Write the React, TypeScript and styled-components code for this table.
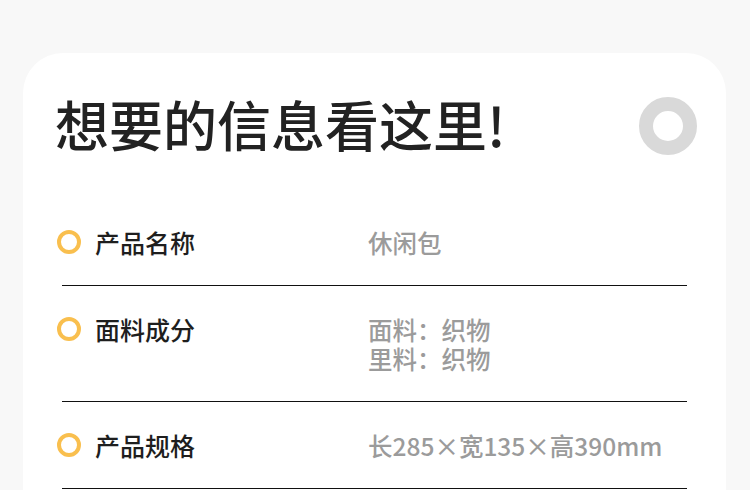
import React from "react";
import styled, { createGlobalStyle } from "styled-components";

const GlobalStyle = createGlobalStyle`
    html, body {
        margin: 0;
        padding: 0;
        background-color: #f8f8f8;
        overflow: hidden;
    }

    body {
        font-family: "Noto Sans CJK SC", "Noto Sans", sans-serif;
    }
`;

const Page = styled.div`
    width: 750px;
    height: 490px;
    padding: 53px 24px 0 23px;
    box-sizing: border-box;
`;

const Card = styled.div`
    background-color: #ffffff;
    border-radius: 40px 40px 0 0;
    min-height: 500px;
    padding: 44px 29px 0 32px;
`;

const Header = styled.div`
    display: flex;
    justify-content: space-between;
    align-items: center;
    height: 58px;
`;

const Title = styled.h1`
    margin: -4px 0 0;
    font-size: 54px;
    line-height: 58px;
    font-weight: 500;
    color: #222222;
`;

const Ring = styled.div`
    width: 30px;
    height: 30px;
    border: 14px solid #d9d9d9;
    border-radius: 50%;
`;

const List = styled.div`
    margin: 44px 10px 0 7px;
`;

const Row = styled.div`
    display: flex;
    align-items: flex-start;
    padding: 29px 0 28px;
    border-bottom: 1px solid #111111;
`;

const Dot = styled.span`
    flex: none;
    width: 16px;
    height: 16px;
    margin: 2px 14px 0 -5px;
    border: 4px solid #f9bf4e;
    border-radius: 50%;
`;

const Label = styled.div`
    width: 273px;
    flex: none;
    font-size: 25px;
    line-height: 29px;
    font-weight: 500;
    color: #1e1e1e;
`;

const Value = styled.div`
    font-size: 24.5px;
    line-height: 29px;
    font-weight: 500;
    color: #9b9b9b;
`;

interface Spec {
    label: string;
    values: string[];
}

const specs: Spec[] = [
    { label: "产品名称", values: ["休闲包"] },
    { label: "面料成分", values: ["面料：织物", "里料：织物"] },
    { label: "产品规格", values: ["长285×宽135×高390mm"] },
];

function App() {
    return <Page>
        <GlobalStyle />
        <Card>
            <Header>
                <Title>想要的信息看这里!</Title>
                <Ring />
            </Header>

            <List>
                {specs.map((spec) => (
                    <Row key={spec.label}>
                        <Dot />
                        <Label>{spec.label}</Label>
                        <Value>
                            {spec.values.map((v) => <div key={v}>{v}</div>)}
                        </Value>
                    </Row>
                ))}
            </List>
        </Card>
    </Page>
}

export default App;
